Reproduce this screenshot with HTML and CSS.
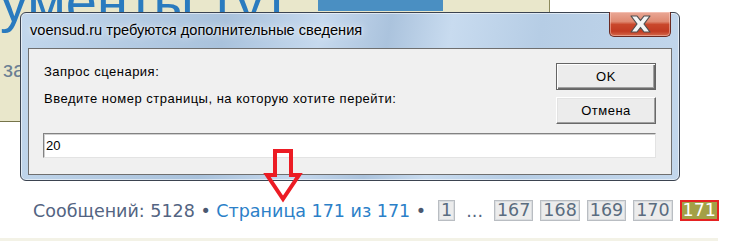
FILE: index.html
```html
<!DOCTYPE html>
<html lang="ru">
<head>
    <meta charset="UTF-8">
    <title>voensud.ru</title>
    <link rel="stylesheet" href="styles.css">
</head>
<body>
    <div class="banner">
        <div class="banner-top">
            <div class="banner-title">ументы тут</div>
            <span class="banner-btn"></span>
        </div>
        <div class="banner-sub">за</div>
    </div>

    <div class="pagination">
        <span class="posts">Сообщений: 5128 <span class="sep">•</span> <a class="page-link">Страница 171 из 171</a> <span class="sep">•</span></span>
        <span class="page-box first">1</span>
        <span class="dots">...</span>
        <span class="page-box">167</span>
        <span class="page-box">168</span>
        <span class="page-box">169</span>
        <span class="page-box">170</span>
        <span class="page-box current">171</span>
    </div>
    <div class="footer-line"></div>

    <div class="dialog">
        <div class="dialog-bar">
            <div class="dialog-title">voensud.ru требуются дополнительные сведения</div>
            <button class="dialog-close">
                <svg viewBox="0 0 21 18" width="21" height="18">
                    <polygon points="1,1 7,1 10.5,5.5 14,1 20,1 14,9 20,17 14,17 10.5,12.5 7,17 1,17 7,9" />
                </svg>
            </button>
        </div>
        <div class="dialog-body">
            <div class="dialog-row">
                <div class="dialog-labels">
                    <p>Запрос сценария:</p>
                    <p class="prompt">Введите номер страницы, на которую хотите перейти:</p>
                </div>
                <div class="dialog-buttons">
                    <button class="btn btn-default">OK</button>
                    <button class="btn">Отмена</button>
                </div>
            </div>
            <input class="dialog-input" type="text" value="20">
        </div>
    </div>

    <svg class="arrow" viewBox="0 0 42 60" width="42" height="60">
        <polygon points="12,4 28,4 28,28 36,28 20,52 4,28 12,28" />
    </svg>
</body>
</html>
```

FILE: styles.css
```css
* {
    box-sizing: border-box;
    margin: 0;
    padding: 0;
}
body {
    position: relative;
    width: 732px;
    height: 241px;
    overflow: hidden;
    background: #fff;
    font-family: "Liberation Sans", Arial, sans-serif;
}

/* page behind the dialog */
.banner {
    width: 550px;
    height: 122px;
    background: #e9e7cb;
    border-right: 1px solid #8c8a5c;
    border-bottom: 1px solid #76744a;
    overflow: hidden;
}
.banner-top {
    display: flex;
    align-items: flex-start;
}
.banner-title {
    width: 318px;
    margin-top: -26px;
    font-size: 56px;
    line-height: 56px;
    color: #2a7bbf;
    white-space: nowrap;
}
.banner-btn {
    width: 125px;
    height: 11px;
    background: #4a8fc2;
}
.banner-sub {
    margin-top: 27px;
    padding-left: 3px;
    font-size: 22px;
    line-height: 26px;
    color: #6b7f93;
}

.pagination {
    display: flex;
    align-items: center;
    height: 21px;
    margin-top: 78px;
    padding-left: 33px;
    font-family: "DejaVu Sans", Verdana, sans-serif;
    font-size: 17.5px;
    color: #536482;
}
.posts {
    white-space: nowrap;
}
.sep {
    color: #4a5870;
}
.page-link {
    color: #2b80c8;
}
.page-box {
    height: 21px;
    margin-left: 7px;
    padding: 0 2px;
    line-height: 19px;
    background: #ececec;
    border: 1px solid #b9bdc2;
    box-shadow: inset 0 0 0 1px #dadde0;
    color: #5a6c80;
}
.page-box.first {
    margin-left: 12px;
    padding: 0 2px;
}
.page-box.current {
    background: #a3a046;
    border: 2px solid #e52222;
    box-shadow: none;
    padding: 0 1px;
    line-height: 17px;
    color: #fff;
}
.dots {
    margin: 0 4px 0 11px;
    color: #536482;
}
.footer-line {
    width: 718px;
    height: 3px;
    margin-top: 17px;
    background: #f3f2e6;
}

/* script prompt window */
.dialog {
    position: absolute;
    left: 20px;
    top: 12px;
    width: 660px;
    height: 169px;
    display: flex;
    flex-direction: column;
    padding: 0 7px 5px 7px;
    border: 1px solid #3b4350;
    border-radius: 6px;
    background: linear-gradient(100deg, #c2d7ec 0%, #b3cae2 18%, #a9c2dc 30%, #c6d9ee 44%, #abc3dd 54%, #c8dbef 63%, #b6cde5 76%, #c3d7ec 100%);
    box-shadow: inset 0 0 0 1px rgba(255,255,255,0.55);
}
.dialog-bar {
    display: flex;
    justify-content: space-between;
    align-items: flex-start;
    height: 35px;
}
.dialog-title {
    padding: 9px 0 0 2px;
    font-size: 14.6px;
    line-height: 17px;
    color: #000;
    text-shadow: 0 0 8px rgba(255,255,255,0.9), 0 0 3px rgba(255,255,255,0.8);
}
.dialog-close {
    display: flex;
    align-items: center;
    justify-content: center;
    width: 62px;
    height: 25px;
    margin: -1px 1px 0 0;
    border: 1px solid #6b2a22;
    border-top: none;
    border-radius: 0 0 5px 5px;
    background: linear-gradient(#eaa896 0%, #df8a72 40%, #c9482c 52%, #c23b22 80%, #d46a4c 100%);
    box-shadow: inset 0 0 0 1px rgba(255,220,210,0.45);
}
.dialog-close polygon {
    fill: #f4f4f4;
    stroke: #4e4e4e;
    stroke-width: 1.2;
    stroke-linejoin: round;
}
.dialog-body {
    flex: 1;
    padding: 14px 15px 0 14px;
    background: #f0f0f0;
    border: 1px solid #6f6f6f;
    font-size: 13px;
    letter-spacing: 0.5px;
    color: #000;
}
.dialog-row {
    display: flex;
    justify-content: space-between;
}
.dialog-labels {
    padding: 0.5px 0 0 1px;
    line-height: 16px;
}
.dialog-labels .prompt {
    margin-top: 11px;
}
.dialog-buttons {
    display: flex;
    flex-direction: column;
    gap: 7px;
    width: 100px;
}
.btn {
    height: 27px;
    font-family: "Liberation Sans", Arial, sans-serif;
    font-size: 13px;
    letter-spacing: 0.5px;
    color: #000;
    background: #ececec;
    border: 1px solid;
    border-color: #fff #696969 #696969 #fff;
    box-shadow: inset -1px -1px #a0a0a0, inset 1px 1px #e3e3e3;
}
.btn-default {
    border-color: #646464;
    box-shadow: inset 1px 1px #fff, inset -1px -1px #6b6b6b, inset -2px -2px #a0a0a0;
}
.dialog-input {
    display: block;
    width: 100%;
    height: 25px;
    margin-top: 9px;
    padding: 0 2px;
    font-family: "Liberation Sans", Arial, sans-serif;
    font-size: 13px;
    color: #000;
    background: #fff;
    border: 1px solid;
    border-color: #828282 #e3e3e3 #e3e3e3 #828282;
    box-shadow: inset 1px 1px #d0d0d0;
    outline: none;
}

/* red annotation arrow */
.arrow {
    position: absolute;
    left: 263px;
    top: 147px;
}
.arrow polygon {
    fill: none;
    stroke: #ec1c24;
    stroke-width: 4;
}
```
